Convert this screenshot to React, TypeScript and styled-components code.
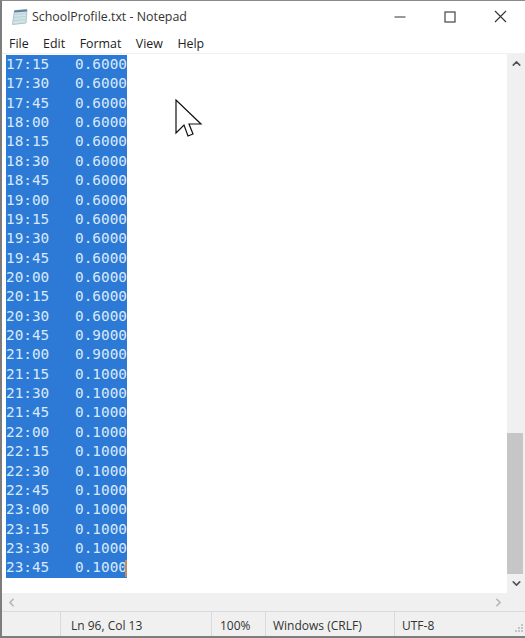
import React from "react";
import styled, { createGlobalStyle } from "styled-components";
import { ChevronUp, ChevronDown, ChevronLeft, ChevronRight } from "lucide-react";

const GlobalStyle = createGlobalStyle`
  html, body {
    margin: 0;
    padding: 0;
    background: #fff;
  }
`;

const Window = styled.div`
  position: relative;
  width: 525px;
  height: 638px;
  box-sizing: border-box;
  display: flex;
  flex-direction: column;
  overflow: hidden;
  background: #fff;
  border-top: 1px solid #8a8a8a;
  border-left: 2px solid #7d7d7d;
  border-bottom: 2px solid #7d7d7d;
  font-family: "Open Sans", "Noto Sans", "Liberation Sans", sans-serif;
  color: #222;
`;

const TitleBar = styled.div`
  height: 31px;
  flex: none;
  display: flex;
  align-items: center;
  padding-left: 9px;
`;

const Title = styled.span`
  margin-left: 3px;
  font-size: 12.4px;
  color: #333;
  flex: 1;
`;

const WindowButton = styled.div`
  width: 50px;
  height: 31px;
  display: flex;
  align-items: center;
  justify-content: center;
`;

const MenuBar = styled.div`
  height: 22px;
  flex: none;
  display: flex;
  align-items: center;
  padding: 2px 0 0 7px;
  box-sizing: border-box;
  gap: 14.5px;
  font-size: 12.4px;
  border-bottom: 1px solid #f0f0f0;
`;

const Middle = styled.div`
  flex: 1;
  min-height: 0;
  display: flex;
`;

const Editor = styled.div`
  flex: 1;
  padding: 1px 0 0 4px;
`;

const Selection = styled.div`
  width: 121px;
  background: #2c7ad6;
  color: #d9e9fa;
  font-family: "DejaVu Sans Mono", "Liberation Mono", monospace;
  font-size: 14.35px;
  position: relative;
`;

const Row = styled.div`
  height: 19.37px;
  line-height: 19.37px;
  white-space: pre;
`;

const Caret = styled.div`
  position: absolute;
  right: 0;
  bottom: 1px;
  width: 2px;
  height: 17px;
  background: #c98a5a;
`;

const VScroll = styled.div`
  width: 18px;
  flex: none;
  display: flex;
  flex-direction: column;
  align-items: stretch;
  background: #f0f0f0;
`;

const Arrow = styled.div`
  height: 19px;
  flex: none;
  display: flex;
  align-items: center;
  justify-content: center;
  color: #555;
`;

const Track = styled.div`
  flex: 1;
  display: flex;
  flex-direction: column;
  justify-content: flex-end;
`;

const Thumb = styled.div`
  height: 141px;
  background: #c6c6c6;
  margin-right: 2px;
`;

const HScroll = styled.div`
  height: 18px;
  flex: none;
  display: flex;
  align-items: center;
  justify-content: space-between;
  background: #f0f0f0;
  padding-right: 18px;
`;

const HArrow = styled.div`
  width: 18px;
  height: 18px;
  display: flex;
  align-items: center;
  justify-content: center;
  color: #b4b4b4;
`;

const StatusBar = styled.div`
  height: 24px;
  flex: none;
  display: flex;
  background: #f0f0f0;
  border-top: 1px solid #dadada;
  font-size: 12px;
  color: #333;
`;

const StatusCell = styled.div<{ $width: number; $pad: number; $first?: boolean }>`
  width: ${(p) => p.$width}px;
  flex: none;
  box-sizing: border-box;
  display: flex;
  align-items: center;
  padding: 2px 0 0 ${(p) => p.$pad}px;
  border-left: ${(p) => (p.$first ? "none" : "1px solid #dadada")};
`;

const Grip = styled.svg`
  position: absolute;
  right: 1px;
  bottom: 1px;
`;

const Cursor = styled.svg`
  position: absolute;
  left: 173px;
  top: 98px;
`;

const rows: [string, string][] = [
  ["17:15", "0.6000"],
  ["17:30", "0.6000"],
  ["17:45", "0.6000"],
  ["18:00", "0.6000"],
  ["18:15", "0.6000"],
  ["18:30", "0.6000"],
  ["18:45", "0.6000"],
  ["19:00", "0.6000"],
  ["19:15", "0.6000"],
  ["19:30", "0.6000"],
  ["19:45", "0.6000"],
  ["20:00", "0.6000"],
  ["20:15", "0.6000"],
  ["20:30", "0.6000"],
  ["20:45", "0.9000"],
  ["21:00", "0.9000"],
  ["21:15", "0.1000"],
  ["21:30", "0.1000"],
  ["21:45", "0.1000"],
  ["22:00", "0.1000"],
  ["22:15", "0.1000"],
  ["22:30", "0.1000"],
  ["22:45", "0.1000"],
  ["23:00", "0.1000"],
  ["23:15", "0.1000"],
  ["23:30", "0.1000"],
  ["23:45", "0.1000"],
];

const NotepadIcon = () => (
  <svg width="18" height="18" viewBox="0 0 18 18">
    <path d="M3.5 2.5 L16 1.5 L15 15 L1.5 16.5 Z" fill="#cfe4e6" stroke="#9fb6bc" strokeWidth="0.8" />
    <path d="M3.5 6.5 L14.5 5.5 M3 9.5 L14.5 8.5 M3 12.5 L14 11.5" stroke="#b3cad0" strokeWidth="0.8" />
    <path d="M3.5 2.5 L16 1.5 L15.8 3.5 L3.3 4.5 Z" fill="#5c7f99" />
  </svg>
);

const App = () => {
  return (
    <>
      <GlobalStyle />
      <Window>
        <TitleBar>
          <NotepadIcon />
          <Title>SchoolProfile.txt - Notepad</Title>
          <WindowButton>
            <svg width="12" height="12" viewBox="0 0 12 12">
              <path d="M0.5 6 H11.5" stroke="#333" strokeWidth="1" />
            </svg>
          </WindowButton>
          <WindowButton>
            <svg width="12" height="12" viewBox="0 0 12 12">
              <rect x="1" y="1" width="10" height="10" fill="none" stroke="#444" strokeWidth="1.2" />
            </svg>
          </WindowButton>
          <WindowButton>
            <svg width="13" height="13" viewBox="0 0 13 13">
              <path d="M1 1 L12 12 M12 1 L1 12" stroke="#333" strokeWidth="1.1" />
            </svg>
          </WindowButton>
        </TitleBar>
        <MenuBar>
          <span>File</span>
          <span>Edit</span>
          <span>Format</span>
          <span>View</span>
          <span>Help</span>
        </MenuBar>
        <Middle>
          <Editor>
            <Selection>
              {rows.map(([time, value]) => (
                <Row key={time}>{`${time}   ${value}`}</Row>
              ))}
              <Caret />
            </Selection>
          </Editor>
          <VScroll>
            <Arrow>
              <ChevronUp size={13} strokeWidth={3} />
            </Arrow>
            <Track>
              <Thumb />
            </Track>
            <Arrow>
              <ChevronDown size={13} strokeWidth={3} />
            </Arrow>
          </VScroll>
        </Middle>
        <HScroll>
          <HArrow>
            <ChevronLeft size={13} strokeWidth={3} />
          </HArrow>
          <HArrow>
            <ChevronRight size={13} strokeWidth={3} />
          </HArrow>
        </HScroll>
        <StatusBar>
          <StatusCell $width={58} $pad={0} $first />
          <StatusCell $width={151} $pad={10}>Ln 96, Col 13</StatusCell>
          <StatusCell $width={54} $pad={8}>100%</StatusCell>
          <StatusCell $width={129} $pad={7}>Windows (CRLF)</StatusCell>
          <StatusCell $width={120} $pad={7}>UTF-8</StatusCell>
        </StatusBar>
        <Grip width="12" height="12" viewBox="0 0 12 12">
          <path d="M9 1h2v2H9z M6 4h2v2H6z M9 4h2v2H9z M3 7h2v2H3z M6 7h2v2H6z M9 7h2v2H9z" fill="#c4c4c4" />
        </Grip>
        <Cursor width="28" height="42" viewBox="0 0 28 42">
          <path
            d="M1 1 L1 34 L9 26 L13 37 L18 35 L14 25 L26 25 Z"
            fill="#fff"
            stroke="#111"
            strokeWidth="1.2"
          />
        </Cursor>
      </Window>
    </>
  );
};

export default App;
